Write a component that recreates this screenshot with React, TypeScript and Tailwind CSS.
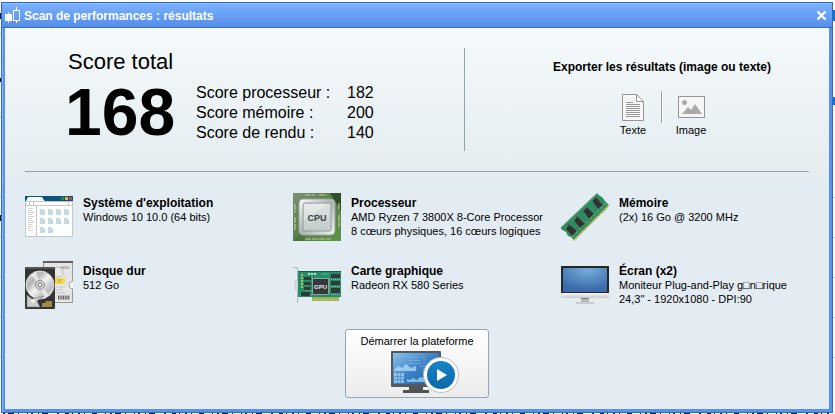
import type { ReactNode } from "react"

interface Score {
  label: string
  value: number
}

interface Component {
  name: string
  lines: string[]
  icon: ReactNode
}

function CandleIcon() {
  return (
    <svg width="16" height="18" viewBox="0 0 16 18" shapeRendering="crispEdges" aria-hidden="true">
      <path d="M3.5 5v11M11.5 0v3M11.5 13v3" stroke="#fff" />
      <rect x="0" y="7" width="7" height="7" fill="#fff" />
      <rect x="8.5" y="3.5" width="6" height="10" fill="none" stroke="#fff" />
    </svg>
  )
}

function TextFileIcon() {
  return (
    <svg width="22" height="27" viewBox="0 0 22 27" aria-hidden="true">
      <path d="M.5.5h14l7 7v19H.5z" fill="#f6f6f6" stroke="#959595" />
      <path d="M14.5.5v7h7z" fill="#fff" stroke="#959595" />
      <path
        d="M4 8.5h7M4 10.5h14M4 12.5h14M4 14.5h14M4 16.5h14M4 18.5h14M4 20.5h14M4 22.5h14"
        stroke="#999"
        shapeRendering="crispEdges"
      />
    </svg>
  )
}

function ImageFileIcon() {
  return (
    <svg width="27" height="22" viewBox="0 0 27 22" aria-hidden="true">
      <rect x=".5" y=".5" width="26" height="21" fill="#f6f6f6" stroke="#959595" />
      <circle cx="6.5" cy="6.5" r="2.5" fill="#aaa" />
      <path d="M4 18l6-7 3 3 4-6 7 10z" fill="#aaa" />
    </svg>
  )
}

function SystemIcon() {
  const files = [
    [15, 13], [23, 13], [31, 13], [39, 13],
    [15, 22], [23, 22], [31, 22], [39, 22],
    [15, 31], [23, 31],
  ]
  return (
    <svg width="48" height="48" viewBox="0 0 48 48" aria-hidden="true">
      <rect x=".5" y="3.5" width="47" height="40" fill="#fff" stroke="#c4c8ca" />
      <path d="M0 3h48v5H0z" fill="#075580" />
      <path d="M1 8c1-1 1-3 2-4h14c1 1 1 3 3 4z" fill="#fff" />
      <path d="M36 4h3v3h-3z" fill="#2f8a3c" />
      <path d="M40 4h3v3h-3z" fill="#e9b54b" />
      <path d="M44 4h3v3h-3z" fill="#c6473d" />
      <path d="M0 8.5h48M0 12.5h48M4.5 9v3M8.5 9v3M43.5 9v3M11.5 13v30" stroke="#c4c8ca" fill="none" />
      <path
        d="M3 15.5h5M3 17.5h4M3 19.5h6M3 21.5h4M3 23.5h6M3 25.5h4M3 27.5h5M3 29.5h6M3 31.5h4M3 33.5h5M3 35.5h3M3 37.5h5"
        stroke="#d2d2d2"
      />
      {files.map(([x, y]) => (
        <path key={`${x}-${y}`} d={`M${x} ${y + 3}h3l2 2v4h-5z`} fill="#c3d9e6" />
      ))}
    </svg>
  )
}

function CpuIcon() {
  return (
    <svg width="48" height="48" viewBox="0 0 48 48" aria-hidden="true">
      <defs>
        <linearGradient id="cpuBoard" x1="0" y1="0" x2="1" y2="1">
          <stop offset="0" stopColor="#7b8f74" />
          <stop offset=".5" stopColor="#56804a" />
          <stop offset="1" stopColor="#5d9546" />
        </linearGradient>
        <linearGradient id="cpuRim" x1="0" y1="0" x2="1" y2="1">
          <stop offset="0" stopColor="#fff" />
          <stop offset=".5" stopColor="#aeb4b3" />
          <stop offset="1" stopColor="#f2f4f4" />
        </linearGradient>
        <linearGradient id="cpuCap" x1="0" y1="0" x2="0" y2="1">
          <stop offset="0" stopColor="#dde3e1" />
          <stop offset="1" stopColor="#c2cbc9" />
        </linearGradient>
      </defs>
      <path d="M0 0h48v48H0z" fill="url(#cpuBoard)" />
      <path d="M37 0h11v18z" fill="#2f4d29" />
      <path d="M0 48l12-12v12z" fill="#4a7639" />
      <path
        d="M12 2h10M26 2h8M12 46h26M2 11v9M2 24v14M46 22v12M46 10v7"
        stroke="#bfc993"
        strokeWidth="1.2"
        strokeDasharray="6 1"
      />
      <rect x="6" y="6" width="36" height="36" rx="4" fill="url(#cpuRim)" stroke="#9ba39f" />
      <rect x="10" y="10" width="28" height="28" rx="2" fill="url(#cpuCap)" stroke="#929b99" />
      <path d="M11 28V11h23z" fill="#fff" opacity=".3" />
      <text x="24" y="28" textAnchor="middle" fontSize="9" fontWeight="700" fill="#3a4342" fontFamily="Liberation Sans, sans-serif">
        CPU
      </text>
    </svg>
  )
}

function MemoryIcon() {
  return (
    <svg width="48" height="48" viewBox="0 0 48 48" aria-hidden="true">
      <path d="M36 0l3 3 2 1 3 4 4 4-3 4-32 31-3-3-3-1-2-4-5-3V34z" fill="#2d8a61" />
      <path d="M48 12L12 48" stroke="#c5ba52" strokeWidth="2" strokeDasharray="1.5 .7" />
      <path d="M45 10L11 44" stroke="#70c29b" strokeWidth="1" strokeDasharray="3 2" />
      <path d="M36 1L1 34" stroke="#66ad85" />
      <g fill="#30332f" stroke="#69796d" strokeWidth=".5">
        <path d="M35 4l7 8-5 4-6-8z" />
        <path d="M26 14l7 7-5 5-6-8z" />
        <path d="M16 23l8 8-5 4-6-7z" />
        <path d="M8 31l8 7-5 5-6-7z" />
      </g>
    </svg>
  )
}

function DiskIcon() {
  return (
    <svg width="48" height="48" viewBox="0 0 48 48" aria-hidden="true">
      <defs>
        <linearGradient id="platter" x1="0" y1="0" x2="1" y2="1">
          <stop offset="0" stopColor="#efefef" />
          <stop offset=".3" stopColor="#b5b5b5" />
          <stop offset=".5" stopColor="#f2f2f2" />
          <stop offset=".75" stopColor="#bdbdbd" />
          <stop offset="1" stopColor="#f5f5f5" />
        </linearGradient>
      </defs>
      <rect x="18.5" y=".5" width="29" height="41" fill="#e5e5e5" stroke="#999" />
      <path d="M18 0h30v2H18z" fill="#606060" />
      <circle cx="33" cy="11" r="5" fill="#e9e9e9" stroke="#bbb" />
      <path d="M30 17h10v6H30z" fill="#f3dc4d" />
      <path d="M32 19h5M32 21h4" stroke="#a58f29" strokeWidth=".7" />
      <path d="M48 20a4 4 0 000 8" fill="#f2f2f2" stroke="#aaa" />
      <path d="M31 26h9M31 29h7M31 32h10" stroke="#c8c8c8" />
      <path d="M33 36.500h12" stroke="#555" strokeWidth="4" strokeDasharray="1 .7" />
      <text x="36" y="8" fontSize="4" fill="#666" fontFamily="Liberation Sans, sans-serif">
        HDD
      </text>
      <rect x="0" y="6" width="30" height="42" rx="1" fill="#343434" />
      <path d="M1 7h28" stroke="#777" />
      <circle cx="15" cy="24" r="14" fill="url(#platter)" stroke="#ddd" />
      <path d="M15 24L6 14l5-3zM15 24l9 10-5 3z" fill="#fff" opacity=".6" />
      <circle cx="15" cy="24" r="4.5" fill="#d5d5d5" stroke="#8c8c8c" />
      <circle cx="15" cy="24" r="2" fill="#eee" stroke="#777" />
      <path d="M2 46V34l5 4 12-3-7 5 3 6z" fill="#cfcfcf" stroke="#777" strokeWidth=".6" />
      <circle cx="8" cy="40" r="2" fill="#f0f0f0" />
      <path d="M17 42h3l1-2h6v6H17z" fill="#9b8a4a" />
    </svg>
  )
}

function GpuIcon() {
  return (
    <svg width="48" height="48" viewBox="0 0 48 48" aria-hidden="true">
      <path d="M0 6.5h4.5V42" stroke="#b1b8bb" fill="none" />
      <path d="M2 20h3v9H2z" fill="#d8dadb" stroke="#b9bdbf" strokeWidth=".5" />
      <path d="M5 11h43v25H5z" fill="#238e68" />
      <path d="M19 36h27v4H19z" fill="#93ac57" />
      <path d="M20 38.5h25" stroke="#c3c66c" strokeWidth="2" strokeDasharray="1.5 .8" />
      <path d="M5 10.5h43" stroke="#136348" />
      <path d="M9 13v15" stroke="#b5bd62" strokeWidth="2" strokeDasharray="2 1" />
      <path d="M15 13h8" stroke="#cfddd4" strokeWidth="2" strokeDasharray="2 1" />
      <path d="M12 17h7M12 29h7M36 17v15M29 13h7M7 34h12" stroke="#7fc6a5" strokeWidth=".7" />
      <g fill="#34383b">
        <path d="M11 16h7v3h-7zM11 21h7v3h-7zM11 26h7v3h-7zM8 31h9v4H8z" />
        <path d="M38 13h9v4h-9zM38 20h9v4h-9zM38 27h9v5h-9z" />
      </g>
      <path d="M38 18.5h9M38 25.5h9M38 33.5h9" stroke="#93c9a9" strokeDasharray="1 1" />
      <rect x="19.5" y="17.5" width="16" height="16" fill="#34383b" stroke="#8aa79a" />
      <text x="27.5" y="28" textAnchor="middle" fontSize="6" fontWeight="700" fill="#eee" fontFamily="Liberation Sans, sans-serif">
        GPU
      </text>
    </svg>
  )
}

function ScreenIcon() {
  return (
    <svg width="48" height="48" viewBox="0 0 48 48" aria-hidden="true">
      <defs>
        <radialGradient id="screenGlow" cx=".55" cy=".1" r=".8">
          <stop offset="0" stopColor="#75add9" />
          <stop offset="1" stopColor="#3c6bab" />
        </radialGradient>
        <linearGradient id="screenBase" x1="0" y1="0" x2="0" y2="1">
          <stop offset="0" stopColor="#f7f7f7" />
          <stop offset="1" stopColor="#cbcbcb" />
        </linearGradient>
      </defs>
      <rect x="0" y="5" width="48" height="28" fill="#25272a" />
      <rect x="2" y="7" width="44" height="24" fill="url(#screenGlow)" />
      <path d="M0 32h48v5H0z" fill="url(#screenBase)" />
      <path d="M20 37h8v4h-8z" fill="#b7babb" />
      <path d="M20 37h8v1h-8z" fill="#777" />
      <path d="M15 42h18" stroke="#cacdcf" strokeWidth="2" />
    </svg>
  )
}

function PlatformIcon() {
  return (
    <svg width="68" height="43" viewBox="0 0 68 43" aria-hidden="true">
      <defs>
        <linearGradient id="platformScreen" x1="0" y1="0" x2="1" y2="1">
          <stop offset="0" stopColor="#8dc3ee" />
          <stop offset=".5" stopColor="#3c82c6" />
          <stop offset="1" stopColor="#1b5aa5" />
        </linearGradient>
        <linearGradient id="playDisc" x1="0" y1="0" x2="0" y2="1">
          <stop offset="0" stopColor="#1683c5" />
          <stop offset="1" stopColor="#0b68aa" />
        </linearGradient>
      </defs>
      <rect x="0" y="0" width="50" height="36" rx="1" fill="#55585b" />
      <rect x="2" y="2" width="46" height="31" fill="url(#platformScreen)" />
      <path d="M3 19l4-4 4 2 4-4 5 4 5-2v5H3z" fill="#b8dbf4" opacity=".75" />
      <path d="M3 22h10v10H3z" fill="#b8dbf4" opacity=".65" />
      <path d="M6.5 22v10M9.5 22v10M3 25.5h10M3 28.5h10" stroke="#3c82c6" strokeWidth=".6" />
      <path d="M16 31v-3l3 1 3-2 4 2 3-3 4 1v4z" fill="#9dcaeb" opacity=".8" />
      <path d="M18 9.5h12M18 12.5h12M18 6.5h8M33 5v15M29 15.5h15M31 19.5h13" stroke="#9fcaed" strokeDasharray="2 1" opacity=".5" />
      <path d="M18 36h14v3h6v3H12v-3h6z" fill="#505356" />
      <circle cx="50" cy="24" r="17.5" fill="#fff" stroke="#b6bfc4" />
      <circle cx="50" cy="24" r="14" fill="url(#playDisc)" />
      <path d="M46 18l10 6-10 6z" fill="#fff" />
    </svg>
  )
}

const scores: Score[] = [
  { label: "Score processeur :", value: 182 },
  { label: "Score mémoire :", value: 200 },
  { label: "Score de rendu :", value: 140 },
]

const components: Component[] = [
  { name: "Système d'exploitation", lines: ["Windows 10 10.0 (64 bits)"], icon: <SystemIcon /> },
  {
    name: "Processeur",
    lines: ["AMD Ryzen 7 3800X 8-Core Processor", "8 cœurs physiques, 16 cœurs logiques"],
    icon: <CpuIcon />,
  },
  { name: "Mémoire", lines: ["(2x) 16 Go @ 3200 MHz"], icon: <MemoryIcon /> },
  { name: "Disque dur", lines: ["512 Go"], icon: <DiskIcon /> },
  { name: "Carte graphique", lines: ["Radeon RX 580 Series"], icon: <GpuIcon /> },
  {
    name: "Écran (x2)",
    lines: ["Moniteur Plug-and-Play g□n□rique", "24,3\" - 1920x1080 - DPI:90"],
    icon: <ScreenIcon />,
  },
]

function ComponentCard({ component }: { component: Component }) {
  return (
    <div className="flex h-12 gap-2.5">
      <div className="shrink-0">{component.icon}</div>
      <div className="pt-[3px] whitespace-nowrap">
        <h2 className="text-xs leading-[14px] font-bold">{component.name}</h2>
        {component.lines.map((line) => (
          <p key={line}>{line}</p>
        ))}
      </div>
    </div>
  )
}

export default function App() {
  return (
    <div className="relative bg-white pt-[2px] pr-[2px] pl-px font-['Liberation_Sans',Arial,sans-serif] text-[11px] leading-[14px] text-black">
      <main className="border border-[#2c69c8] bg-[#5792ea]">
        {/* Title bar */}
        <header className="flex h-[25px] items-center border-t border-b border-t-[#8fc2ff] border-b-[#346bc4] bg-linear-to-b from-[#79b0ff] to-[#568ee9] pr-[3px] pl-[3px] text-white">
          <CandleIcon />
          <h1 className="ml-[3px] flex-1 text-xs leading-[14px] font-bold">Scan de performances : résultats</h1>
          <button type="button" aria-label="Fermer" className="flex h-4 w-4 items-center justify-center">
            <svg width="11" height="11" viewBox="0 0 11 11" aria-hidden="true">
              <path d="M1.5 1.5l8 8M9.5 1.5l-8 8" stroke="#fff" strokeWidth="2.4" />
            </svg>
          </button>
        </header>

        <div className="border-l border-[#8abaf8] pr-[3px] pb-[3px] pl-[2px]">
          <div className="bg-[#e4ecf3] bg-linear-to-b from-[#f5f9fb] via-[#e6eef1] via-35% to-[#e4ecf3] to-42% px-5 pt-5 pb-[11px]">
            {/* Scores */}
            <div className="flex h-[103px]">
              <section className="flex w-[440px] gap-5 border-r border-[#93a3ab] pl-[43px]">
                <div className="w-[108px]">
                  <p className="text-[22px] leading-7">Score total</p>
                  <p className="mt-1 -ml-[3px] text-[66px] leading-[64px] font-bold">168</p>
                </div>
                <dl className="grid content-start grid-cols-[151px_auto] pt-[35px] text-base leading-5">
                  {scores.map((score) => (
                    <div key={score.label} className="col-span-2 grid grid-cols-subgrid">
                      <dt>{score.label}</dt>
                      <dd>{score.value}</dd>
                    </div>
                  ))}
                </dl>
              </section>

              {/* Export */}
              <section className="flex flex-1 flex-col items-center pt-3 pl-[50px]">
                <h2 className="text-xs leading-[14px] font-bold">Exporter les résultats (image ou texte)</h2>
                <div className="mt-[17px] flex">
                  <button type="button" className="flex w-14 flex-col items-center">
                    <span className="flex h-8 items-center">
                      <TextFileIcon />
                    </span>
                    Texte
                  </button>
                  <span className="h-8 w-[2px] border-r border-l border-r-white border-l-[#93a3ab]" />
                  <button type="button" className="flex w-14 flex-col items-center">
                    <span className="flex h-8 items-center">
                      <ImageFileIcon />
                    </span>
                    Image
                  </button>
                </div>
              </section>
            </div>

            <hr className="mt-5 border-[#93a3ab]" />

            {/* Hardware */}
            <section className="mt-[21px] grid grid-cols-3 gap-5">
              {components.map((component) => (
                <ComponentCard key={component.name} component={component} />
              ))}
            </section>

            <button
              type="button"
              className="mx-auto mt-5 flex h-[69px] w-36 flex-col items-center rounded-[3px] border border-[#98a3aa] bg-linear-to-b from-white to-[#ececec] pt-1"
            >
              Démarrer la plateforme
              <span className="mt-[3px] pl-4">
                <PlatformIcon />
              </span>
            </button>
          </div>
        </div>
      </main>

      {/* Edges of the page behind the window */}
      <svg className="block h-px w-full" aria-hidden="true">
        <path
          d="M2 .5h831"
          stroke="#1b1b2b"
          strokeDasharray="2 3 6 4 1 8 1 3 2 5 1 3 6 9 2 6 4 3 1 5 2 4 1 7 5 8 1 4"
        />
      </svg>
      <svg className="absolute top-0 left-0 h-full w-px" aria-hidden="true">
        <path d="M.5 13v6M.5 78v4M.5 215v6" stroke="#1b1b2b" />
        <path d="M.5 33v1M.5 117v1M.5 197v1M.5 237v1M.5 277v1M.5 317v1M.5 357v1" stroke="#b9c3d6" />
      </svg>
      <svg className="absolute top-0 right-0 h-full w-[2px]" aria-hidden="true">
        <path d="M1 10v11M1 97v8" stroke="#1673b8" strokeWidth="2" />
        <path d="M1 197v1M1 237v1M1 277v1M1 317v1M1 357v1" stroke="#c3cad6" strokeWidth="2" />
      </svg>
    </div>
  )
}
